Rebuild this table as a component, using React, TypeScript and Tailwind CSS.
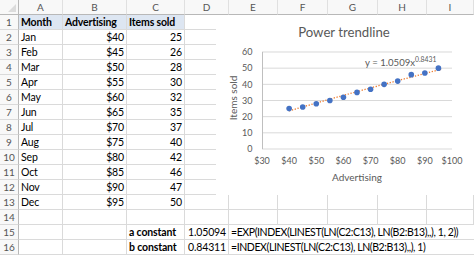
import React from "react";

const cols = ["A", "B", "C", "D", "E", "F", "G", "H", "I"];
const data: [string, number, number][] = [
  ["Jan", 40, 25], ["Feb", 45, 26], ["Mar", 50, 28], ["Apr", 55, 30], ["May", 60, 32], ["Jun", 65, 35],
  ["Jul", 70, 37], ["Aug", 75, 40], ["Sep", 80, 42], ["Oct", 85, 46], ["Nov", 90, 47], ["Dec", 95, 50],
];

const gl = "border-r border-b border-[#dadada]";
const gridCols = "grid grid-cols-[19px_44px_64px_58px_44px_49px_50px_50px_49px_47px]";

function RowNum({ n }: { n: number }) {
  return (
    <div className="h-[15px] border-r border-[#b8b8b8] border-b border-b-[#dadada] bg-[#f8f8f8] text-[#555] flex items-center justify-center text-[10px] leading-none">
      {n}
    </div>
  );
}

function Cell({ children, cls = "" }: { children?: React.ReactNode; cls?: string }) {
  return <div className={`h-[15px] ${gl} flex items-center px-[2px] whitespace-nowrap leading-none ${cls}`}>{children}</div>;
}

const X = (v: number) => 262 + (v - 30) * 2.714;
const Y = (v: number) => 149 - v * 1.6167;

function Chart() {
  const trend: string[] = [];
  for (let x = 40; x <= 96; x += 1) {
    const y = 1.0509 * Math.pow(x, 0.8431);
    trend.push(`${X(x).toFixed(1)},${Y(y).toFixed(1)}`);
  }
  const ys = [0, 10, 20, 30, 40, 50, 60];
  const xs = [30, 40, 50, 60, 70, 80, 90, 100];
  return (
    <svg
      className="absolute left-[216px] top-[15px] bg-white"
      width={258}
      height={180}
      viewBox="216 15 258 180"
      style={{ fontFamily: "Lato, 'Liberation Sans', sans-serif" }}
    >
      <rect x={216} y={15} width={258} height={180} fill="#fff" />
      <text x={344} y={37} textAnchor="middle" fontSize={13.2} fill="#595959">Power trendline</text>
      {ys.map((v) => (
        <g key={v}>
          {v > 0 && <line x1={262} x2={452} y1={Y(v)} y2={Y(v)} stroke="#d9d9d9" strokeWidth={1} />}
          <text x={252.5} y={Y(v) + 3.2} textAnchor="end" fontSize={9} fill="#595959">{v}</text>
        </g>
      ))}
      <line x1={262} x2={452} y1={Y(0)} y2={Y(0)} stroke="#d9d9d9" strokeWidth={1} />
      <line x1={262.5} x2={262.5} y1={Y(60)} y2={Y(0)} stroke="#bfbfbf" strokeWidth={1} />
      {xs.map((v) => (
        <text key={v} x={X(v)} y={164} textAnchor="middle" fontSize={9} fill="#595959">${v}</text>
      ))}
      <text x={357} y={180.5} textAnchor="middle" fontSize={10} fill="#595959">Advertising</text>
      <text x={0} y={0} transform="translate(237 98) rotate(-90)" textAnchor="middle" fontSize={10} fill="#595959">Items sold</text>
      <polyline points={trend.join(" ")} fill="none" stroke="#ed7d31" strokeWidth={1.3} strokeDasharray="1.3 1.6" />
      {data.map(([m, x, y]) => (
        <circle key={m} cx={X(x)} cy={Y(y)} r={2.8} fill="#4472c4" />
      ))}
      <text x={365} y={66} fontSize={9.6} fill="#595959">
        y = 1.0509x<tspan fontSize={6.8} dy={-4}>0.8431</tspan>
      </text>
    </svg>
  );
}

export default function App() {
  const t = "text-[10.5px] tracking-[-0.15px]";
  const f = "text-[10.5px] tracking-[-0.4px]";
  return (
    <div className="relative w-[474px] h-[256px] overflow-hidden bg-white text-black" style={{ fontFamily: "Lato, 'Liberation Sans', sans-serif" }}>
      <div className={gridCols}>
        <div className="h-[15px] relative bg-[#f8f8f8] border-r border-b border-[#b8b8b8]">
          <div className="absolute right-[2px] bottom-[2px] w-0 h-0 border-l-[8px] border-l-transparent border-b-[8px] border-b-[#dcdcdc]" />
        </div>
        {cols.map((c) => (
          <div key={c} className="h-[15px] bg-[#f8f8f8] border-r border-r-[#e0e0e0] border-b border-b-[#b8b8b8] flex items-center justify-center text-[10px] text-[#555] leading-none">
            {c}
          </div>
        ))}

        <RowNum n={1} />
        <Cell cls={`bg-[#dde6f2] font-bold ${t}`}>Month</Cell>
        <Cell cls={`bg-[#dde6f2] font-bold ${t}`}>Advertising</Cell>
        <Cell cls={`bg-[#dde6f2] font-bold ${t}`}>Items sold</Cell>
        <Cell />
        <Cell /><Cell /><Cell /><Cell /><Cell />

        {data.map(([m, a, s], i) => (
          <React.Fragment key={m}>
            <RowNum n={i + 2} />
            <Cell cls={t}>{m}</Cell>
            <Cell cls={`${t} justify-end`}>${a}</Cell>
            <Cell cls={`${t} justify-end`}>{s}</Cell>
            <Cell />
            <Cell /><Cell /><Cell /><Cell /><Cell />
          </React.Fragment>
        ))}

        <RowNum n={14} />
        <Cell /><Cell /><Cell /><Cell />
        <Cell /><Cell /><Cell /><Cell /><Cell />

        <RowNum n={15} />
        <Cell /><Cell />
        <Cell cls={`font-bold ${t}`}>a constant</Cell>
        <Cell cls={`${t} justify-end`}>1.05094</Cell>
        <div className={`col-span-5 h-[15px] border-b border-[#dadada] flex items-center px-[2px] whitespace-nowrap leading-none ${f}`}>
          =EXP(INDEX(LINEST(LN(C2:C13), LN(B2:B13),,), 1, 2))
        </div>

        <RowNum n={16} />
        <Cell /><Cell />
        <Cell cls={`font-bold ${t}`}>b constant</Cell>
        <Cell cls={`${t} justify-end`}>0.84311</Cell>
        <div className={`col-span-5 h-[15px] border-b border-[#dadada] flex items-center px-[2px] whitespace-nowrap leading-none ${f}`}>
          =INDEX(LINEST(LN(C2:C13), LN(B2:B13),,), 1)
        </div>
      </div>
      <Chart />
    </div>
  );
}
